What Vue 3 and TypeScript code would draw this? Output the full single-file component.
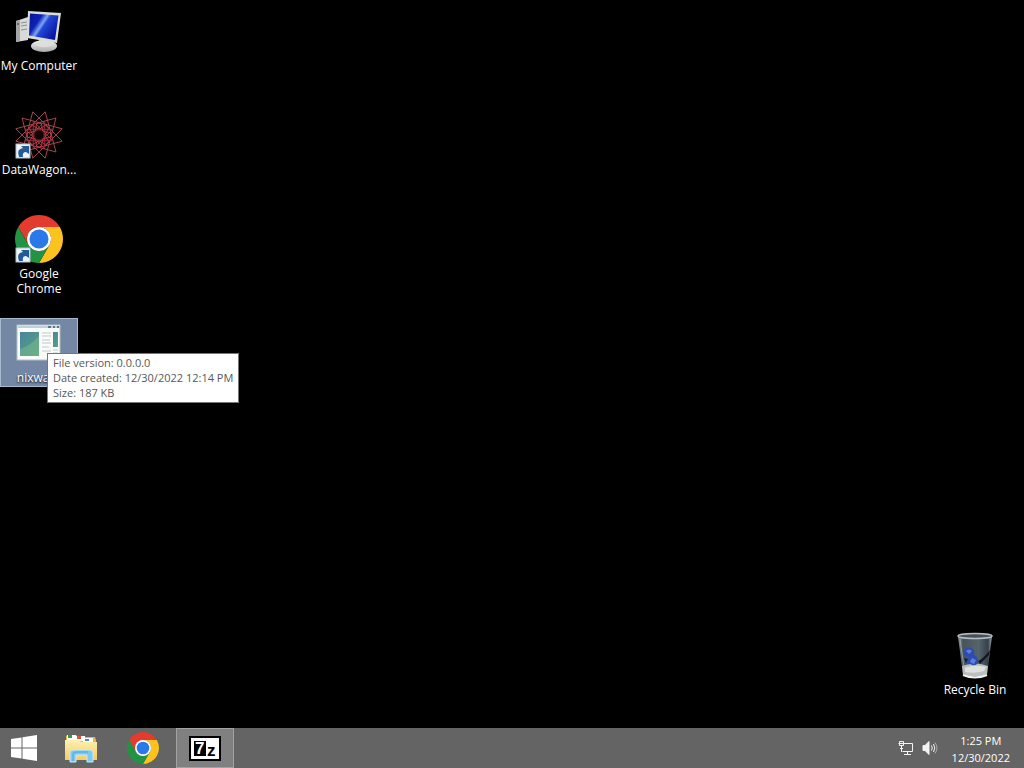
<script setup lang="ts">
interface DesktopItem {
  id: string
  label: string
  shortcut?: boolean
  selected?: boolean
}

const items: DesktopItem[] = [
  { id: 'computer', label: 'My Computer' },
  { id: 'wagon', label: 'DataWagon...', shortcut: true },
  { id: 'chrome', label: 'Google\nChrome', shortcut: true },
  { id: 'app', label: 'nixware', selected: true },
]

const details = ['File version: 0.0.0.0', 'Date created: 12/30/2022 12:14 PM', 'Size: 187 KB']

// Closed star polygon centred on 24,24
function star(points: number, step: number, radius: number, turn = 0): string {
  const list: string[] = []
  for (let i = 0; i < points; i++) {
    const a = ((i * step) / points) * Math.PI * 2 + turn
    list.push(`${(24 + radius * Math.cos(a)).toFixed(2)},${(24 + radius * Math.sin(a)).toFixed(2)}`)
  }
  return list.join(' ')
}
const triangles = [0, 1, 2, 3].map((i) => star(3, 1, 24, (i * Math.PI) / 6 + Math.PI / 12))
const innerStar = star(8, 3, 15, Math.PI / 8)
const rings = Array.from({ length: 8 }, (_, i) => {
  const a = (i / 8) * Math.PI * 2
  return { x: 24 + 9 * Math.cos(a), y: 24 + 9 * Math.sin(a) }
})
</script>

<template>
  <div class="screen">
    <svg class="defs" aria-hidden="true">
      <defs>
        <linearGradient id="blueGlass" x1="0" y1="0" x2="1" y2=".6">
          <stop offset="0" stop-color="#0a1490" /><stop offset=".35" stop-color="#0b22b8" />
          <stop offset=".5" stop-color="#7fa4f5" /><stop offset=".58" stop-color="#2347d6" /><stop offset="1" stop-color="#0716a0" />
        </linearGradient>
        <linearGradient id="silver" x1="0" y1="0" x2="0" y2="1">
          <stop offset="0" stop-color="#f4f4f2" /><stop offset="1" stop-color="#a9aaa8" />
        </linearGradient>
        <linearGradient id="greenPane" x1="0" y1="0" x2="1" y2="1">
          <stop offset="0" stop-color="#4a83a0" /><stop offset="1" stop-color="#55a67c" />
        </linearGradient>
        <linearGradient id="binGlass" x1="0" y1="0" x2="1" y2="0">
          <stop offset="0" stop-color="#8c999f" /><stop offset=".15" stop-color="#46545b" />
          <stop offset=".6" stop-color="#56646b" /><stop offset=".88" stop-color="#34414a" /><stop offset="1" stop-color="#9aa5aa" />
        </linearGradient>
        <linearGradient id="folder" x1="0" y1="0" x2="0" y2="1">
          <stop offset="0" stop-color="#fff0ae" /><stop offset="1" stop-color="#f1cd67" />
        </linearGradient>
        <g id="chromeLogo">
          <path fill="#e33b2e" d="M24 12H44.78A24 24 0 0 0 3.22 12L13.6 30A12 12 0 0 1 24 12Z" />
          <path fill="#fcc31e" d="M34.39 30 24 48A24 24 0 0 0 44.78 12H24A12 12 0 0 1 34.39 30Z" />
          <path fill="#229342" d="M13.6 30 3.22 12A24 24 0 0 0 24 48L34.39 30A12 12 0 0 1 13.6 30Z" />
          <circle cx="24" cy="24" r="12" fill="#fff" />
          <circle cx="24" cy="24" r="9.5" fill="#2b78e8" />
        </g>
      </defs>
    </svg>

    <main class="desktop">
      <div class="column">
        <div v-for="item in items" :key="item.id" class="slot">
          <button class="item" :class="{ selected: item.selected }" type="button">
            <svg viewBox="0 0 48 48" class="icon" aria-hidden="true">
              <g v-if="item.id === 'computer'">
                <path d="M1 14 13 10V33L1 35Z" fill="#d9dad7" />
                <path d="M1 14 5 13V34L1 35Z" fill="#a4a6a5" />
                <path d="M6 16 12 15M6 19 12 18M6 23 12 22" stroke="#8d8f8e" />
                <circle cx="3" cy="17" r="1" fill="#555" />
                <path d="M24 32H32L33 39H24Z" fill="#a8aaa9" />
                <ellipse cx="29" cy="39" rx="13" ry="6" fill="url(#silver)" />
                <ellipse cx="29" cy="37" rx="9" ry="3" fill="#dededb" />
                <path d="M13 4 46 6 42 36 12 31Z" fill="#d9dcda" />
                <path d="M15 6.500 43.500 8.500 40 33 14 28.500Z" fill="url(#blueGlass)" />
              </g>
              <g v-else-if="item.id === 'wagon'" fill="none" stroke-width="1">
                <polygon v-for="points in triangles" :key="points" :points="points" stroke="#a5464c" />
                <polygon :points="innerStar" stroke="#96313c" />
                <circle v-for="(ring, i) in rings" :key="i" :cx="ring.x" :cy="ring.y" r="3" stroke="#c03b4a" />
                <circle cx="24" cy="24" r="5" fill="#100305" stroke="#661b24" />
              </g>
              <use v-else-if="item.id === 'chrome'" href="#chromeLogo" />
              <g v-else>
                <rect x="2" y="6" width="43" height="35" fill="#fafcfa" stroke="#b3c0c8" />
                <path d="M3 8H45" stroke="#c0d0da" stroke-width="2" />
                <path d="M33 8H36M38 8H40M42 8H44" stroke="#557994" stroke-width="2" />
                <rect x="5" y="13" width="19" height="24" fill="url(#greenPane)" />
                <path d="M5 30Q15 27 24 17V37H5Z" fill="#8ac391" opacity=".4" />
                <path d="M27 14H36M27 17H36M27 21H35M27 24H36M27 28H34M27 32H36M38 31H43M38 34H43" stroke="#c2c7c8" />
                <rect x="38" y="13" width="5" height="15" fill="url(#greenPane)" />
              </g>
              <g v-if="item.shortcut">
                <rect x="1" y="33" width="14" height="14" fill="#edf3f8" stroke="#b6c0c8" />
                <path d="M4 46Q1 38 8 37L6 35H14V43L11 41Q7 41 8 46Z" fill="#235b94" />
              </g>
            </svg>
            <span class="label">{{ item.label }}</span>
          </button>
          <div v-if="item.selected" class="tooltip" role="tooltip">
            <div v-for="line in details" :key="line">{{ line }}</div>
          </div>
        </div>
      </div>

      <button class="item" type="button">
        <svg viewBox="0 0 48 48" class="icon" aria-hidden="true">
          <path d="M7 5H41L36 44Q24 49 12 44Z" fill="url(#binGlass)" />
          <path d="M11 35Q24 30 37 35L36 43Q24 48 12 43Z" fill="#b9c0be" />
          <path d="M13 37Q24 33 35 36L33 40Q24 43 14 41Z" fill="#dde0dc" />
          <path d="M13 20Q15 15 20 17Q25 19 23 24Q28 26 27 32Q24 36 19 33Q15 34 14 30L18 26Q12 26 13 20Z" fill="#2d4caf" />
          <path d="M15 20Q18 17 21 20L18 23ZM21 27 25 29 23 33 19 31Z" fill="#5b7fe0" />
          <path d="M13 27 17 28 15 32Z" fill="#121d45" />
          <path d="M27 30Q32 28 39 19L38 24 29 33Z" fill="#11181e" />
          <path d="M9 8 14 43" stroke="#aab4b8" opacity=".7" />
          <ellipse cx="24" cy="5" rx="17" ry="2.500" fill="#465159" stroke="#b7bebf" stroke-width="1.500" />
          <path d="M12 44Q24 49 36 44" fill="none" stroke="#f0f2f1" stroke-width="2" />
        </svg>
        <span class="label">Recycle Bin</span>
      </button>
    </main>

    <footer class="taskbar">
      <button class="start" type="button" aria-label="Start">
        <svg viewBox="0 0 26 26" class="logo" aria-hidden="true">
          <path fill="#fff" d="M0 4 10.500 2.500V12.500H0ZM11.500 2.300 26 0V12.500H11.500ZM0 13.500H10.500V23.500L0 22ZM11.500 13.500H26V26L11.500 23.700Z" />
        </svg>
      </button>
      <button class="task" type="button" aria-label="File Explorer">
        <svg viewBox="0 0 32 32" class="task-icon" aria-hidden="true">
          <path d="M1 4 3 3H11L13 5H30L31 8V28H1Z" fill="#dfb84e" />
          <path d="M2 3H11V8H2Z" fill="#fff" /><path d="M3 3H7V6H3Z" fill="#23a143" />
          <path d="M10 4H20V9H10Z" fill="#fff" /><path d="M12 4H16V7H12Z" fill="#df5437" />
          <path d="M18 6H28V10H18Z" fill="#fff" /><path d="M20 7H24V9H20Z" fill="#438fc9" />
          <path d="M0 8H13L16 10H32V28H0Z" fill="url(#folder)" />
          <path d="M5 30V21Q5 18 8 18H25Q28 18 28 21V30H22V23H11V30Z" fill="#82c8ed" stroke="#c6eafa" />
          <path d="M8 29V22Q8 20 11 20H23" fill="none" stroke="#4ba6db" />
        </svg>
      </button>
      <button class="task" type="button" aria-label="Google Chrome">
        <svg viewBox="0 0 48 48" class="task-icon" aria-hidden="true"><use href="#chromeLogo" /></svg>
      </button>
      <button class="task active" type="button" aria-label="7z">
        <svg viewBox="0 0 32 25" class="zip" aria-hidden="true">
          <rect width="32" height="25" fill="#000" />
          <rect x="2" y="2" width="28" height="21" fill="#fff" />
          <rect x="5" y="5" width="12" height="15" fill="#000" />
          <text x="6" y="18" class="seven">7</text>
          <text x="18" y="20" class="zee">z</text>
        </svg>
      </button>
      <div class="tray">
        <button type="button" aria-label="Network">
          <svg viewBox="0 0 16 16" aria-hidden="true" fill="none" stroke="#f4f4f4">
            <path d="M6 3.500H14.500V11.500H4.500M9.500 12V14M6 14.500H13" />
            <path d="M1.500 1.500H5.500V5.500H1.500ZM3.500 6V12M2 8.500H5M0.500 3.500H6" />
          </svg>
        </button>
        <button type="button" aria-label="Volume">
          <svg viewBox="0 0 16 16" aria-hidden="true" fill="none" stroke="#f4f4f4">
            <path d="M1 5.500H3L7 1.500V14.500L3 10.500H1Z" fill="#f4f4f4" />
            <path d="M9.500 5.500Q11 8 9.500 10.500M11.500 4Q14 8 11.500 12" />
            <path d="M13 2.500Q17 8 13 13.500" stroke="#aaa" />
          </svg>
        </button>
        <button class="clock" type="button">
          <time>1:25 PM</time>
          <time>12/30/2022</time>
        </button>
      </div>
    </footer>
  </div>
</template>

<style>
body {
  background: #000;
}
</style>

<style scoped>
.screen {
  display: flex;
  flex-direction: column;
  height: 100vh;
  background: #000;
  color: #fff;
  font: 12px/15px "Open Sans", "Noto Sans", sans-serif;
}
.defs {
  position: absolute;
  width: 0;
  height: 0;
}
button {
  margin: 0;
  padding: 0;
  border: 0;
  background: none;
  color: inherit;
  font: inherit;
}
.desktop {
  flex: 1;
  display: flex;
  justify-content: space-between;
  padding: 6px 10px 29px 0;
}
.desktop > .item {
  align-self: flex-end;
}
.column {
  display: grid;
  grid-auto-rows: 104px;
  align-content: start;
}
.slot {
  position: relative;
}
.item {
  display: flex;
  flex-direction: column;
  align-items: center;
  gap: 3px;
  width: 78px;
  min-height: 69px;
  border: 1px solid transparent;
}
.selected {
  background: #7488a5;
  border-color: #a9bad0;
}
.icon {
  width: 48px;
  height: 48px;
}
.label {
  white-space: pre;
  text-shadow: 0 1px 2px #000;
}
.tooltip {
  position: absolute;
  left: 47px;
  top: 35px;
  padding: 1px 5px 2px;
  border: 1px solid #767676;
  background: #fff;
  color: #575757;
  font-size: 11px;
  white-space: nowrap;
}
.taskbar {
  display: flex;
  gap: 4px;
  height: 40px;
  background: #646464;
}
.start {
  display: grid;
  place-items: center;
  width: 48px;
}
.logo {
  width: 26px;
  height: 26px;
}
.task {
  display: grid;
  place-items: center;
  width: 58px;
}
.active {
  background: #808080;
  border: 1px solid #a2a2a2;
}
.task-icon {
  width: 32px;
  height: 32px;
}
.zip {
  width: 32px;
  height: 25px;
}
.seven,
.zee {
  font: bold 17px "Liberation Sans", sans-serif;
  fill: #fff;
}
.zee {
  fill: #000;
}
.tray {
  display: flex;
  align-items: center;
  gap: 8px;
  margin-left: auto;
  padding-right: 14px;
}
.tray svg {
  display: block;
  width: 16px;
  height: 16px;
}
.clock {
  display: flex;
  flex-direction: column;
  align-items: center;
  margin-left: 6px;
  padding-top: 2px;
  font-size: 11px;
  line-height: 17px;
}
</style>
